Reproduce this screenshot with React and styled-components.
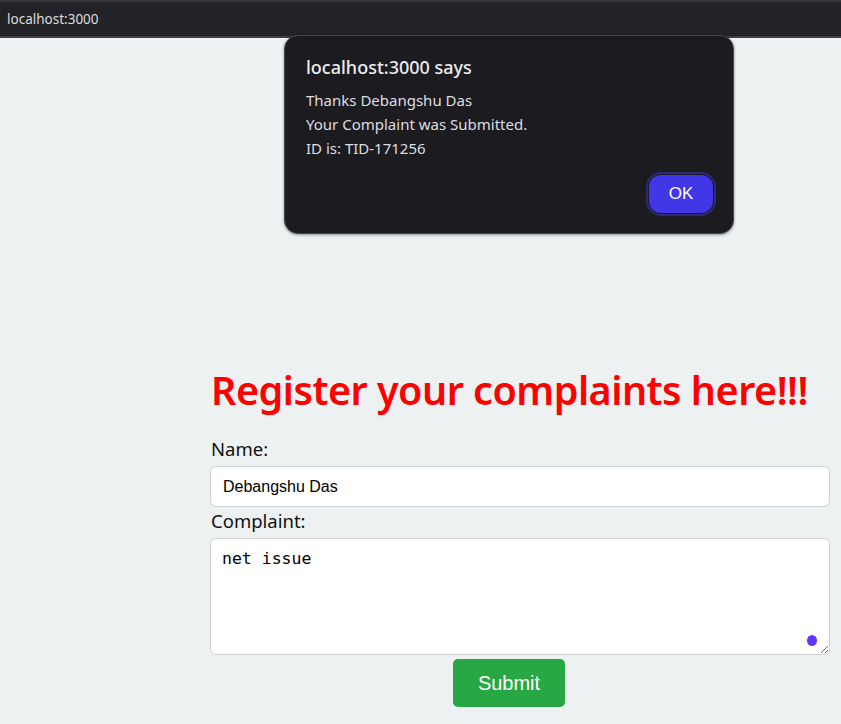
import React from "react";
import styled, { createGlobalStyle } from "styled-components";

const Global = createGlobalStyle`
  html, body { margin: 0; padding: 0; }
  body { background: #edf1f2; font-family: "Noto Sans", "Open Sans", sans-serif; }
`;

const Screen = styled.div`
  position: relative;
  width: 841px;
  height: 724px;
  overflow: hidden;
  background: #edf1f2;
`;

const AddressBar = styled.div`
  height: 34px;
  background: #232327;
  border-top: 2px solid #38383c;
  border-bottom: 2px solid #3d3d42;
  display: flex;
  align-items: center;
  padding-left: 7px;
  color: #dcdcdc;
  font-family: "Noto Sans", sans-serif;
  font-size: 13.5px;
`;

const Dialog = styled.div`
  position: absolute;
  left: 284px;
  top: 35px;
  width: 450px;
  height: 199px;
  background: #1c1b20;
  border: 1px solid #47464c;
  border-radius: 14px;
  box-shadow: 0 1px 3px rgba(0,0,0,0.4);
  padding: 19px 20px 0 21px;
  box-sizing: border-box;
  display: flex;
  flex-direction: column;
  color: #e4e4e6;
  font-family: "Noto Sans", sans-serif;
`;

const DialogTitle = styled.div`
  font-size: 18px;
  line-height: 24px;
  font-weight: 500;
  color: #ececee;
  margin-bottom: 9px;
`;

const DialogLine = styled.div`
  font-size: 15px;
  line-height: 24px;
  color: #dedee0;
`;

const DialogActions = styled.div`
  margin-top: auto;
  display: flex;
  justify-content: flex-end;
  padding-bottom: 20px;
`;

const OkButton = styled.button`
  width: 64px;
  height: 38px;
  border-radius: 12px;
  background: #4237e6;
  border: none;
  box-shadow: 0 0 0 1px #1c1b20, 0 0 0 3px #2e2a78;
  color: #fff;
  font-family: "Liberation Sans", Arial, sans-serif;
  font-size: 17px;
  cursor: pointer;
`;

const Main = styled.main`
  padding: 330px 11px 0 210px;
  font-family: "Noto Sans", "Open Sans", sans-serif;
`;

const Heading = styled.h1`
  margin: 0 0 27px 1px;
  color: #ff0000;
  font-size: 39.5px;
  line-height: 44px;
  font-weight: 600;
  letter-spacing: -0.5px;
  white-space: nowrap;
`;

const Form = styled.form`
  display: flex;
  flex-direction: column;
  width: 620px;
`;

const Label = styled.label`
  font-size: 18.5px;
  line-height: 20px;
  color: #111;
  margin: 0 0 7px 1px;
`;

const TextInput = styled.input`
  box-sizing: border-box;
  height: 41px;
  width: 100%;
  border: 1px solid #cfd2d4;
  border-radius: 6px;
  background: #fff;
  padding: 0 12px;
  font-family: "Liberation Sans", Arial, sans-serif;
  font-size: 16px;
  color: #000;
  margin-bottom: 4px;
  outline: none;
`;

const AreaWrap = styled.div`
  position: relative;
  width: 100%;
`;

const TextArea = styled.textarea`
  display: block;
  box-sizing: border-box;
  width: 100%;
  height: 117px;
  border: 1px solid #cfd2d4;
  border-radius: 6px;
  background: #fff;
  padding: 10px 11px;
  font-family: "DejaVu Sans Mono", monospace;
  font-size: 16.5px;
  line-height: 19px;
  color: #000;
  outline: none;
  resize: vertical;
`;

const Dot = styled.span`
  position: absolute;
  right: 13px;
  bottom: 9px;
  width: 10px;
  height: 11px;
  border-radius: 50%;
  background: #6236ff;
`;

const SubmitRow = styled.div`
  display: flex;
  padding-left: 243px;
  margin-top: 4px;
`;

const SubmitButton = styled.button`
  width: 112px;
  height: 48px;
  border: none;
  border-radius: 5px;
  background: #28a745;
  color: #fff;
  font-family: "Liberation Sans", Arial, sans-serif;
  font-size: 20px;
  cursor: pointer;
`;

export default function App() {
  return (
    <>
      <Global />
      <Screen>
        <AddressBar>localhost:3000</AddressBar>
        <Main>
          <Heading>Register your complaints here!!!</Heading>
          <Form onSubmit={(e) => e.preventDefault()}>
            <Label htmlFor="name">Name:</Label>
            <TextInput id="name" defaultValue="Debangshu Das" />
            <Label htmlFor="complaint">Complaint:</Label>
            <AreaWrap>
              <TextArea id="complaint" defaultValue="net issue" />
              <Dot />
            </AreaWrap>
            <SubmitRow>
              <SubmitButton type="submit">Submit</SubmitButton>
            </SubmitRow>
          </Form>
        </Main>
        <Dialog>
          <DialogTitle>localhost:3000 says</DialogTitle>
          <DialogLine>Thanks Debangshu Das</DialogLine>
          <DialogLine>Your Complaint was Submitted.</DialogLine>
          <DialogLine>ID is: TID-171256</DialogLine>
          <DialogActions>
            <OkButton>OK</OkButton>
          </DialogActions>
        </Dialog>
      </Screen>
    </>
  );
}
